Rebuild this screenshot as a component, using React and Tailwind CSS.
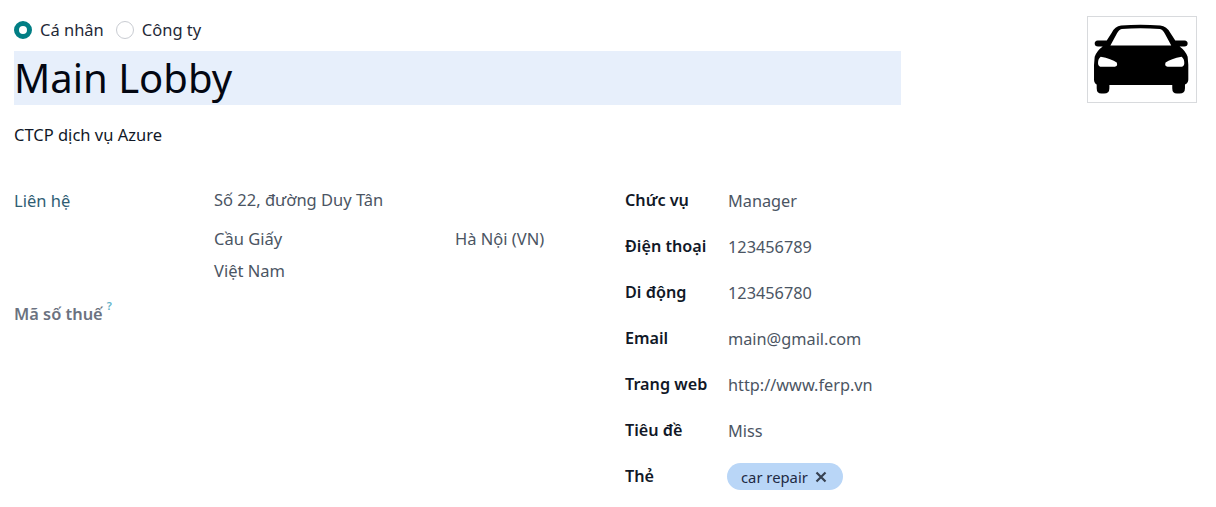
const font = "font-['Noto_Sans','Open_Sans',sans-serif]";

function Radio({ checked, label }) {
  return (
    <label className="flex items-center gap-[8px]">
      {checked ? (
        <span className="h-[18px] w-[18px] rounded-full border-[5px] border-[#017e84] bg-white" />
      ) : (
        <span className="h-[18px] w-[18px] rounded-full border border-[#c9ccd2] bg-white" />
      )}
      <span className="text-[16.5px] leading-[24px] text-[#1f2937]">{label}</span>
    </label>
  );
}

function CarImage() {
  return (
    <div className="h-[87px] w-[110px] shrink-0 border border-[#d8dadd] bg-white">
      <svg viewBox="36 28 323 252" className="h-full w-full" aria-hidden="true">
        <path
          fill="#000"
          fillRule="evenodd"
          d="M135 52 Q192 48 252 52 Q272 54 282 74 L297 97 L325 97 Q334 98 334 106 Q334 115 324 115 L310 115 Q328 128 334 146 L336 170 L336 214 Q336 225 326 229 L326 240 Q326 256 310 256 L302 256 Q288 256 288 240 L288 230 L100 230 L100 240 Q100 256 84 256 L76 256 Q62 256 62 240 L62 229 Q54 225 54 214 L54 170 L56 146 Q62 128 80 115 L66 115 Q56 115 56 106 Q56 98 65 97 L92 97 L107 74 Q116 54 135 52 Z
             M137 63 Q128 65 122 77 L103 112 L285 112 L266 77 Q260 65 251 63 Q192 58 137 63 Z
             M74 146 Q66 152 66 165 Q66 176 78 176 L116 176 Q126 174 122 163 Q106 152 74 146 Z
             M316 146 Q324 152 324 165 Q324 176 312 176 L274 176 Q264 174 268 163 Q284 152 316 146 Z"
        />
      </svg>
    </div>
  );
}

function Row({ label, children }) {
  return (
    <div className="flex h-[46px] items-start">
      <div className="w-[103px] pt-[1px] text-[16.2px] font-semibold leading-[24px] text-[#111827]">{label}</div>
      <div className="pt-[2px] text-[16.3px] leading-[24px] text-[#4b5563]">{children}</div>
    </div>
  );
}

export default function App() {
  return (
    <div className={`${font} h-[507px] w-[1216px] overflow-hidden bg-white px-[14px] pt-[16px]`}>
      <div className="flex justify-between pr-[5px]">
        <div className="w-[887px]">
          <div className="flex h-[28px] items-center gap-[12px]">
            <Radio checked label="Cá nhân" />
            <Radio label="Công ty" />
          </div>
          <div className="mt-[7px] h-[54px] bg-[#e7effb] text-[40px] leading-[54px] text-[#030712]">Main Lobby</div>
          <div className="mt-[18px] text-[16.5px] leading-[24px] text-[#111827]">CTCP dịch vụ Azure</div>
        </div>
        <CarImage />
      </div>

      <div className="mt-[40px] flex">
        <div className="w-[611px] shrink-0">
          <div className="flex">
            <div className="w-[200px] pt-[2px] text-[16.5px] leading-[24px] text-[#2f5d73]">Liên hệ</div>
            <div className="flex-1 text-[16.5px] leading-[32px] text-[#4b5563]">
              <div className="mt-[-3px] h-[39px]">Số 22, đường Duy Tân</div>
              <div className="flex">
                <span className="w-[241px]">Cầu Giấy</span>
                <span>Hà Nội (VN)</span>
              </div>
              <div>Việt Nam</div>
            </div>
          </div>
          <div className="mt-[15px] flex items-start text-[16.4px] font-semibold leading-[24px] text-[#6b7280]">
            Mã số thuế
            <sup className="ml-[4px] mt-[4px] text-[11px] font-semibold leading-[10px] text-[#5fb3c9]">?</sup>
          </div>
        </div>

        <div className="flex-1">
          <Row label="Chức vụ">Manager</Row>
          <Row label="Điện thoại">123456789</Row>
          <Row label="Di động">123456780</Row>
          <Row label="Email">main@gmail.com</Row>
          <Row label="Trang web">http://www.ferp.vn</Row>
          <Row label="Tiêu đề">Miss</Row>
          <Row label="Thẻ">
            <span className="-ml-[1px] -mt-[2px] flex h-[27px] w-[116px] items-center gap-[7px] rounded-full bg-[#b9d6f7] pl-[14px] text-[14.8px] leading-[20px] text-[#1f2a44]">
              car repair
              <svg viewBox="0 0 12 12" className="h-[12px] w-[12px]" aria-hidden="true">
                <path d="M1.5 1.5 L10.5 10.5 M10.5 1.5 L1.5 10.5" stroke="#374151" strokeWidth="2.2" />
              </svg>
            </span>
          </Row>
        </div>
      </div>
    </div>
  );
}
